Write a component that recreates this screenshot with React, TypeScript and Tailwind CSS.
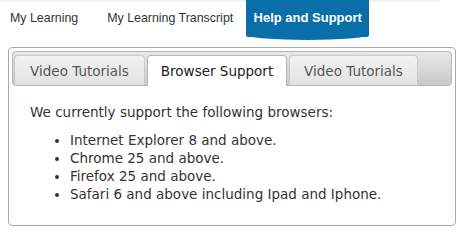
import React from "react";

export default function App() {
  return (
    <div className="w-[464px] h-[237px] bg-white relative overflow-hidden" style={{ fontFamily: "'DejaVu Sans', Verdana, sans-serif" }}>
      <div className="absolute left-0 top-0 w-[440px] h-[3px] bg-gradient-to-b from-[#ececec] to-white" />
      <div className="flex h-[37px] items-stretch text-[12.4px] text-[#333]" style={{ fontFamily: "'Liberation Sans', Arial, sans-serif" }}>
        <div className="pl-[10px] pt-[9px]">My Learning</div>
        <div className="pl-[29px] pt-[9px]">My Learning Transcript</div>
        <div className="relative ml-[13px] w-[123px] bg-[#0a6ea9] text-white font-bold text-[13px] text-center pt-[8px] rounded-b-[2px]">
          Help and Support
          <div className="absolute left-[2px] right-[2px] -bottom-[3px] h-[6px] bg-[#0a6ea9] rounded-b-[60%_100%]" />
        </div>
      </div>
      <div className="mx-[8px] mt-[10px] h-[179px] border border-[#a8a8a8] rounded-[4px] px-[3px] pt-[3px]">
        <div className="h-[35px] border border-[#b5b5b5] rounded-[4px] bg-gradient-to-b from-[#e8e8e8] to-[#c9c9c9] flex items-end pl-[1px] gap-[2px]">
          <div className="w-[131px] h-[30px] border border-b-0 border-[#c9c9c9] rounded-t-[4px] bg-gradient-to-b from-[#f2f2f2] to-[#e2e2e2] text-[13.5px] text-[#555] flex items-center justify-center pt-[1px]">Video Tutorials</div>
          <div className="w-[140px] h-[31px] -mb-[1px] border border-b-0 border-[#b5b5b5] rounded-t-[4px] bg-white text-[13.5px] text-[#222] flex items-center justify-center">Browser Support</div>
          <div className="w-[129px] h-[30px] border border-b-0 border-[#c9c9c9] rounded-t-[4px] bg-gradient-to-b from-[#f2f2f2] to-[#e2e2e2] text-[13.5px] text-[#555] flex items-center justify-center pt-[1px]">Video Tutorials</div>
        </div>
        <div className="pl-[18px] pt-[17px] text-[13.5px] text-[#333] leading-[18px]">
          <p>We currently support the following browsers:</p>
          <ul className="list-disc pl-[40px] mt-[10px]">
            <li>Internet Explorer 8 and above.</li>
            <li>Chrome 25 and above.</li>
            <li>Firefox 25 and above.</li>
            <li>Safari 6 and above including Ipad and Iphone.</li>
          </ul>
        </div>
      </div>
    </div>
  );
}
